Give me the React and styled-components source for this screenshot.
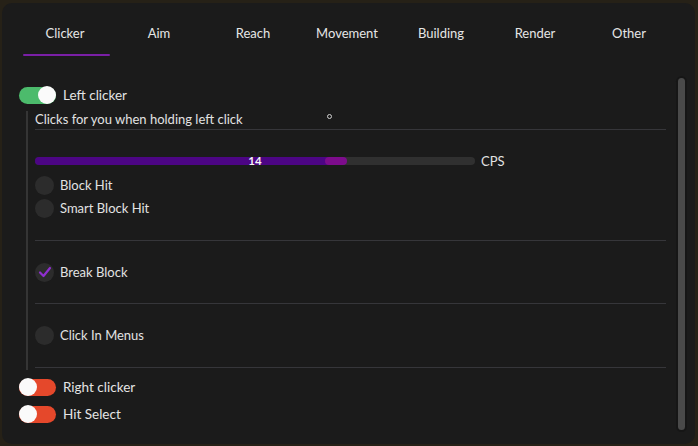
import React, { useState } from "react";
import styled, { createGlobalStyle } from "styled-components";

const GlobalStyle = createGlobalStyle`
  html, body {
    margin: 0;
    padding: 0;
    background: #262117;
    font-family: Lato, "Noto Sans", sans-serif;
  }
`;

const Panel = styled.div`
  margin: 3px 0 0 2px;
  width: 693px;
  height: 441px;
  border-radius: 10px;
  background: #1b1b1b;
  display: flex;
  flex-direction: column;
  overflow: hidden;
`;

const TabBar = styled.div`
  display: flex;
  padding-left: 16px;
`;

const Tab = styled.button`
  width: 94px;
  height: 53px;
  padding: 21px 0 0;
  border: none;
  background: none;
  cursor: pointer;
  display: flex;
  flex-direction: column;
  align-items: center;
  font-family: inherit;
  font-size: 13px;
  line-height: 18px;
  color: #e6e6e6;

  &::after {
    content: "";
    margin-top: 12px;
    width: 87px;
    height: 2px;
    border-radius: 1px;
    margin-left: 3px;
    background: ${({ active }) => (active ? "#7a1fa6" : "transparent")};
  }
`;

const Body = styled.div`
  display: flex;
  padding: 22px 10px 0 17px;
`;

const Main = styled.div`
  flex: 1;
  padding-top: 8px;
  display: flex;
  flex-direction: column;
`;

const Scrollbar = styled.div`
  width: 7px;
  height: 352px;
  margin-left: 12px;
  border-radius: 4px;
  background: #4a4a4a;
  box-shadow: 0 0 0 2px #161616;
`;

const ModuleRow = styled.div`
  display: flex;
  align-items: center;
  height: 18px;
  margin-bottom: ${({ gap }) => gap || 0}px;
  font-size: 13.5px;
  color: #e4e4e4;
  gap: 7px;
`;

const Toggle = styled.div`
  width: 37px;
  height: 17px;
  border-radius: 9px;
  background: ${({ on }) => (on ? "#4cbb6c" : "#e5482b")};
  display: flex;
  justify-content: ${({ on }) => (on ? "flex-end" : "flex-start")};
  align-items: center;
  cursor: pointer;

  &::before {
    content: "";
    width: 18px;
    height: 18px;
    border-radius: 50%;
    background: #fafafa;
  }
`;

const Settings = styled.div`
  margin: 7px 0 8px 7px;
  padding: 0 0 2px 7px;
  border-left: 2px solid #353535;
  display: flex;
  flex-direction: column;
`;

const Description = styled.div`
  display: flex;
  align-items: center;
  height: 16px;
  font-size: 13px;
  color: #e2e2e2;
`;

const Ring = styled.span`
  width: 3px;
  height: 3px;
  margin: -6px 0 0 84px;
  border: 1px solid #d0d0d0;
  border-radius: 50%;
`;

const Divider = styled.div`
  height: 1px;
  background: #36363a;
  margin-top: ${({ top }) => top}px;
`;

const SliderRow = styled.div`
  display: flex;
  align-items: center;
  gap: 6px;
  height: 8px;
  margin-top: 27px;
  font-size: 13px;
  color: #e2e2e2;
`;

const Track = styled.div`
  position: relative;
  width: 440px;
  height: 8px;
  border-radius: 4px;
  background: #303030;
`;

const Fill = styled.div`
  height: 100%;
  border-radius: 4px;
  background: #4c0584;
`;

const Thumb = styled.div`
  position: absolute;
  top: 0;
  width: 22px;
  height: 8px;
  border-radius: 4px;
  background: #7d0c8c;
  transform: translateX(-50%);
`;

const Value = styled.span`
  position: absolute;
  left: 0;
  right: 0;
  top: -4px;
  text-align: center;
  font-size: 11.5px;
  font-weight: 700;
  line-height: 16px;
  color: #f4f4f4;
`;

const CheckRow = styled.label`
  display: flex;
  align-items: center;
  gap: 6px;
  height: 18px;
  margin-top: ${({ top }) => top}px;
  font-size: 13px;
  color: #e2e2e2;
  cursor: pointer;
`;

const Circle = styled.span`
  flex-shrink: 0;
  width: 19px;
  height: 19px;
  border-radius: 50%;
  background: #2c2c2c;
  display: flex;
  align-items: center;
  justify-content: center;
`;

const tabs = ["Clicker", "Aim", "Reach", "Movement", "Building", "Render", "Other"];

function Check({ label, checked, top }) {
  return (
    <CheckRow top={top}>
      <Circle>
        {checked && (
          <svg width="14" height="14" viewBox="0 0 14 14">
            <path d="M2 7.5 L5.5 11 L12 3" fill="none" stroke="#8f2fcf" strokeWidth="2.2" strokeLinecap="round" strokeLinejoin="round" />
          </svg>
        )}
      </Circle>
      {label}
    </CheckRow>
  );
}

export default function App() {
  const [active, setActive] = useState("Clicker");
  const cps = 14;
  const pct = ((cps - 1) / 19) * 100;

  return (
    <>
      <GlobalStyle />
      <Panel>
        <TabBar>
          {tabs.map((t) => (
            <Tab key={t} active={t === active} onClick={() => setActive(t)}>
              {t}
            </Tab>
          ))}
        </TabBar>
        <Body>
          <Main>
            <ModuleRow>
              <Toggle on />
              Left clicker
            </ModuleRow>
            <Settings>
              <Description>
                Clicks for you when holding left click
                <Ring />
              </Description>
              <Divider top={2} />
              <SliderRow>
                <Track>
                  <Fill style={{ width: `${pct}%` }} />
                  <Thumb style={{ left: `${pct}%` }} />
                  <Value>{cps}</Value>
                </Track>
                CPS
              </SliderRow>
              <Check label="Block Hit" top={11} />
              <Check label="Smart Block Hit" top={5} />
              <Divider top={23} />
              <Check label="Break Block" checked top={22} />
              <Divider top={22} />
              <Check label="Click In Menus" top={22} />
              <Divider top={23} />
            </Settings>
            <ModuleRow gap={9}>
              <Toggle />
              Right clicker
            </ModuleRow>
            <ModuleRow>
              <Toggle />
              Hit Select
            </ModuleRow>
          </Main>
          <Scrollbar />
        </Body>
      </Panel>
    </>
  );
}
